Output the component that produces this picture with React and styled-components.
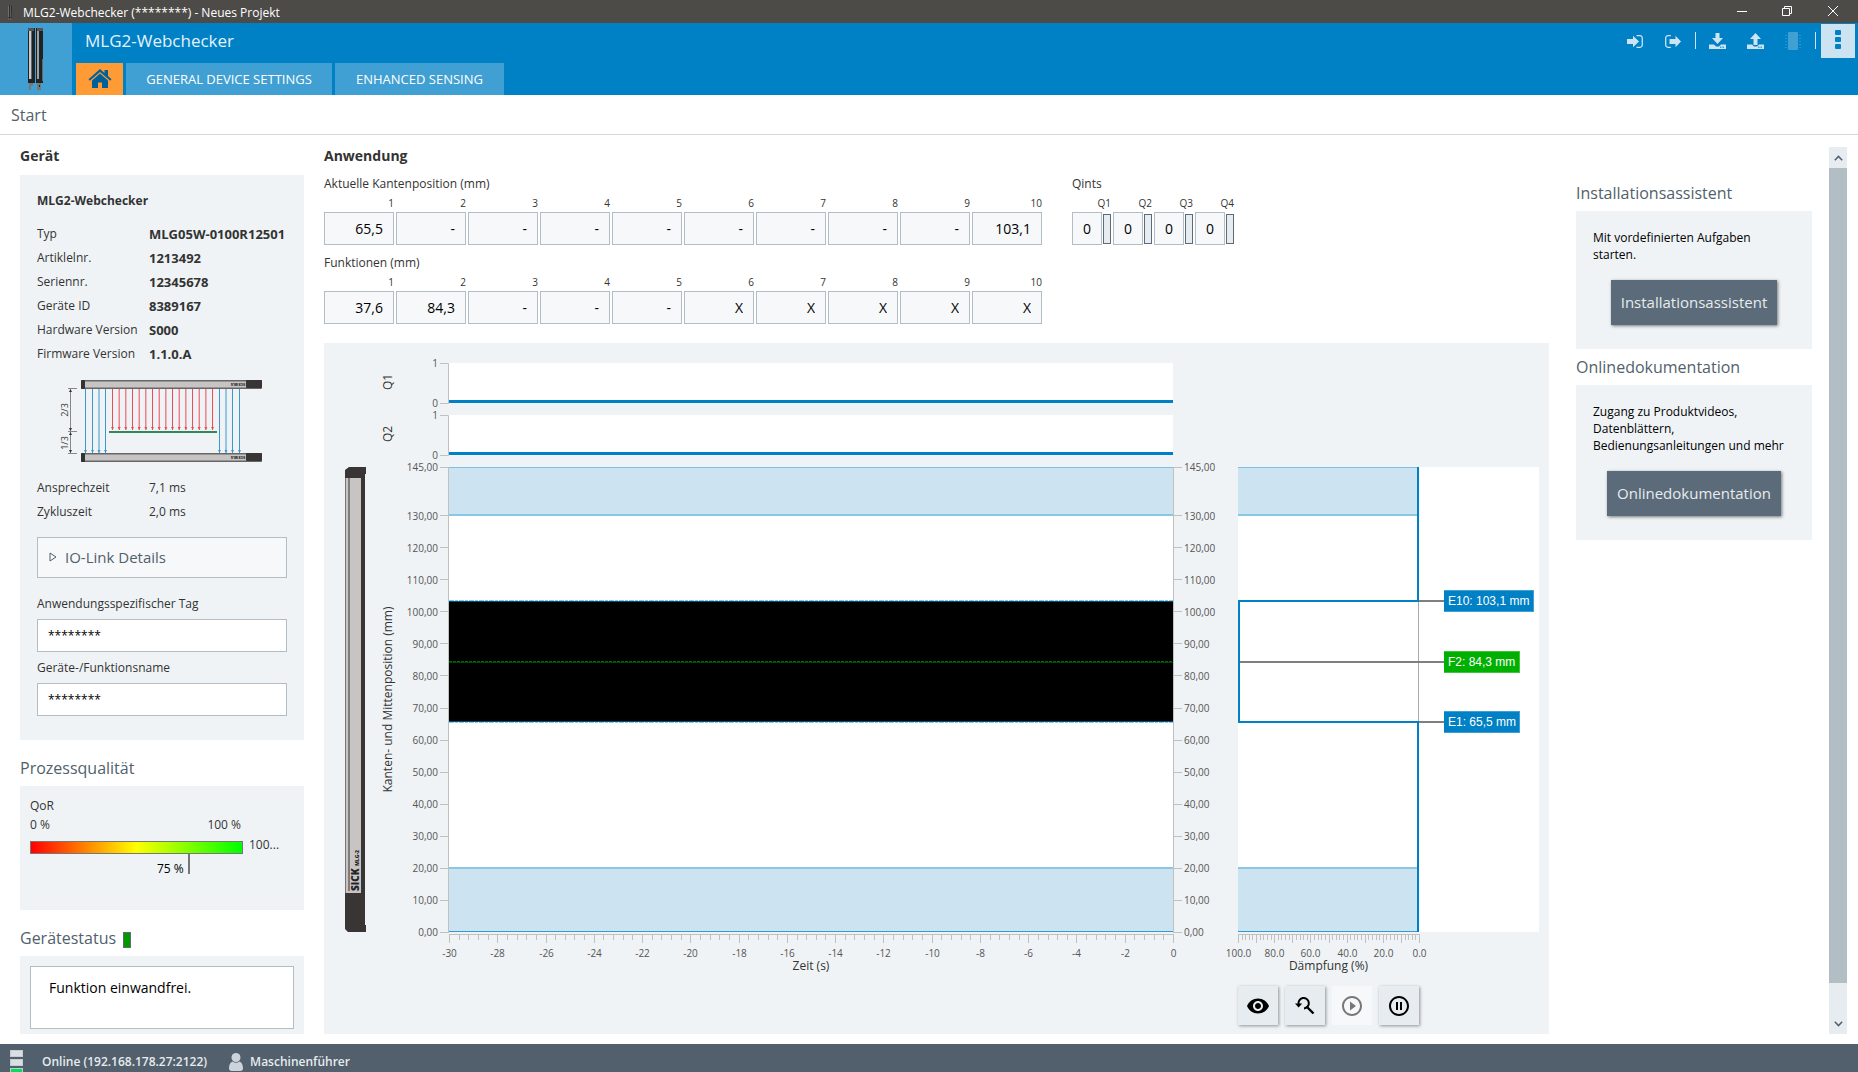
import React, { useLayoutEffect, useRef, useState } from 'react';
import styled, { createGlobalStyle } from 'styled-components';
import { MdVisibility, MdPlayCircleOutline, MdPauseCircleOutline } from 'react-icons/md';

const GlobalStyle = createGlobalStyle`
    * {
        box-sizing: border-box;
    }

    body {
        margin: 0;
        background: #fff;
        color: #333;
        font-family: 'Open Sans', 'Noto Sans', sans-serif;
        font-size: 12px;
    }

    button, input, textarea {
        font-family: inherit;
        margin: 0;
    }
`;

const Page = styled.div`
    display: flex;
    flex-direction: column;
    min-height: 100vh;
`;

/* ---------- window title ---------- */

const TitleBar = styled.div`
    display: flex;
    align-items: center;
    justify-content: space-between;
    height: 23px;
    padding: 1px 20px 0 8px;
    background: #4d4b48;
    color: #fff;
    font-size: 12px;
`;

const TitleText = styled.div`
    display: flex;
    align-items: center;
    gap: 11px;
`;

const WindowControls = styled.div`
    display: flex;
    gap: 35px;
    padding-bottom: 2px;
`;

const PlainButton = styled.button`
    display: flex;
    align-items: center;
    justify-content: center;
    padding: 0;
    border: 0;
    background: none;
    color: inherit;
    cursor: pointer;
`;

/* ---------- header ---------- */

const Header = styled.header`
    display: flex;
    height: 72px;
    background: #0080c5;
`;

const Logo = styled.div`
    display: flex;
    justify-content: center;
    width: 72px;
    padding-top: 5px;
    background: #409fd3;
`;

const HeaderMain = styled.div`
    display: flex;
    flex: 1;
    flex-direction: column;
    justify-content: space-between;
    padding-left: 4px;
`;

const HeaderTitle = styled.h1`
    margin: 0;
    padding: 6px 0 0 9px;
    color: #e6f2f9;
    font-size: 17px;
    font-weight: 400;
    line-height: 24px;
`;

const Tabs = styled.nav`
    display: flex;
    gap: 3px;
`;

const Tab = styled.a`
    display: flex;
    align-items: center;
    justify-content: center;
    width: ${(p) => p.$width}px;
    height: 32px;
    background: ${(p) => (p.$active ? '#ff9b35' : '#409fd3')};
    color: #fff;
    font-size: 13px;
    text-decoration: none;
`;

const HeaderTools = styled.div`
    display: flex;
    align-items: flex-start;
    padding: 1px 3px 0 0;
    color: #cce4f2;
`;

const ToolButton = styled(PlainButton)`
    width: 38px;
    height: 34px;
`;

const ToolDivider = styled.div`
    width: 1px;
    height: 17px;
    margin: 8px 2px 8px 3px;
    background: #cce4f2;
`;

const MenuButton = styled(PlainButton)`
    width: 34px;
    height: 34px;
    margin-left: 3px;
    padding-bottom: 3px;
    background: #cce4f2;
`;

const Breadcrumb = styled.div`
    height: 40px;
    padding-left: 11px;
    border-bottom: 1px solid #d0d8dd;
    color: #525f6c;
    font-size: 16px;
    line-height: 40px;
`;

/* ---------- page columns ---------- */

const Body = styled.div`
    display: flex;
    flex: 1;
    padding: 0 11px 10px 20px;
`;

const LeftColumn = styled.aside`
    width: 284px;
    margin-right: 20px;
    padding-top: 11px;
`;

const MainColumn = styled.main`
    display: flex;
    flex: 1;
    flex-direction: column;
    min-width: 0;
    padding-top: 11px;
`;

const RightColumn = styled.aside`
    width: 236px;
    margin: 0 17px 0 27px;
    padding-top: 46px;
`;

const BoldHeading = styled.h2`
    margin: 0 0 ${(p) => p.$gap}px;
    font-size: 14px;
    font-weight: 700;
    line-height: 20px;
`;

const Heading = styled.h2`
    display: flex;
    align-items: center;
    gap: 7px;
    margin: ${(p) => p.$top || 0}px 0 6px;
    color: #525f6c;
    font-size: 16px;
    font-weight: 400;
    line-height: 24px;
`;

const Card = styled.section`
    padding: ${(p) => p.$pad || '14px 17px 24px'};
    min-height: ${(p) => p.$height || 0}px;
    background: #eff3f6;
`;

const CardTitle = styled.h3`
    margin: 0 0 9px;
    font-size: 12px;
    font-weight: 700;
    line-height: 24px;
`;

const InfoTable = styled.table`
    border-collapse: collapse;
    line-height: 24px;
    white-space: nowrap;

    th {
        width: 112px;
        padding: 0;
        font-weight: 400;
        text-align: left;
    }

    td {
        padding: 0;
        font-size: ${(p) => (p.$bold ? 13 : 12)}px;
        font-weight: ${(p) => (p.$bold ? 700 : 400)};
    }
`;

const DrawingBox = styled.div`
    padding: 12px 0 12px 19px;

    svg {
        display: block;
    }
`;

const Expander = styled.button`
    display: flex;
    align-items: center;
    gap: 8px;
    width: 100%;
    height: 41px;
    margin: 13px 0 10px;
    padding: 0 11px 2px;
    border: 1px solid #b2bec4;
    background: #f6f8fa;
    color: #525f6c;
    font-size: 15px;
`;

const FieldLabel = styled.label`
    display: block;
    padding: 6px 0 5px;
    line-height: 20px;
`;

const TextInput = styled.input`
    display: block;
    width: 100%;
    height: 33px;
    padding: 0 10px;
    border: 1px solid #b2bec4;
    background: #fff;
    color: #000;
    font-size: 12px;
`;

/* ---------- quality + status ---------- */

const GaugeRow = styled.div`
    display: flex;
    gap: 6px;
`;

const Gauge = styled.div`
    width: 213px;
`;

const GaugeScale = styled.div`
    display: flex;
    justify-content: space-between;
    padding-right: 2px;
    margin-bottom: 7px;
    line-height: 18px;
`;

const GaugeBar = styled.div`
    height: 13px;
    border: 1px solid #777;
    background: linear-gradient(90deg, #f00, #ff0 50%, #0f0);
`;

const GaugeMark = styled.div`
    height: 20px;
    padding: 6px 4px 0 0;
    border-right: 2px solid #777;
    color: #000;
    line-height: 18px;
    text-align: right;
`;

const GaugeValue = styled.div`
    padding-top: 20px;
    line-height: 18px;
`;

const Line = styled.div`
    line-height: 21px;
`;

const StatusLamp = styled.span`
    width: 8px;
    height: 16px;
    margin-top: 4px;
    border: 1px solid #5c6b79;
    background: #090;
`;

const StatusText = styled.textarea`
    display: block;
    width: 100%;
    height: 63px;
    padding: 9px 18px;
    border: 1px solid #b2bec4;
    background: #fff;
    color: #000;
    font-size: 14px;
    line-height: 24px;
    resize: none;
`;

/* ---------- readings ---------- */

const Readings = styled.div`
    display: flex;
    gap: 30px;
    margin-bottom: 19px;
`;

const ReadingStack = styled.div`
    display: flex;
    flex-direction: column;
    gap: 8px;
`;

const ReadingTitle = styled.div`
    margin-bottom: 1px;
    line-height: 20px;
`;

const ReadingRow = styled.div`
    display: flex;
    gap: 2px;
`;

const Reading = styled.div`
    width: ${(p) => (p.$small ? 39 : 70)}px;
`;

const ReadingIndex = styled.label`
    display: block;
    font-size: 10px;
    line-height: 17px;
    text-align: right;
`;

const ReadingLine = styled.div`
    display: flex;
    align-items: center;
    gap: 1px;
`;

const ReadingValue = styled.input`
    flex: 1;
    min-width: 0;
    height: 33px;
    padding: 0 ${(p) => (p.$small ? 0 : 10)}px;
    border: 1px solid #b2bec4;
    background: #f6f8fa;
    color: #000;
    font-size: 14px;
    text-align: ${(p) => (p.$small ? 'center' : 'right')};
`;

const QLamp = styled.span`
    width: 8px;
    height: 30px;
    border: 1px solid #5c6b79;
    background: #e6ecef;
`;

/* ---------- chart ---------- */

const ChartPanel = styled.section`
    display: flex;
    flex: 1;
    flex-direction: column;
    background: #eff3f6;
`;

const ChartArea = styled.div`
    flex: 1;
    min-height: 400px;
    overflow: hidden;

    svg {
        display: block;
    }
`;

const ChartButtons = styled.div`
    display: flex;
    justify-content: flex-end;
    gap: 7px;
    padding: 6px 130px 9px 0;
`;

const ChartButton = styled.button`
    display: flex;
    align-items: center;
    justify-content: center;
    width: 40px;
    height: 39px;
    padding: 0;
    border: 0;
    background: #e6ecef;
    color: #000;
    box-shadow: 1px 1px 3px rgba(0, 0, 0, 0.4);

    &:disabled {
        background: #f6f8fa;
        color: #777;
        box-shadow: none;
    }
`;

/* ---------- right side ---------- */

const HelpText = styled.p`
    margin: 0 0 17px;
    color: #000;
    line-height: 17px;
    white-space: nowrap;
`;

const ActionButton = styled.button`
    display: block;
    height: 45px;
    margin: 0 auto;
    padding: 0 10px 2px;
    border: 0;
    background: #5c6b79;
    color: #e6ecef;
    font-size: 15px;
    box-shadow: 1px 1px 3px rgba(0, 0, 0, 0.5);
`;

const ScrollTrack = styled.div`
    display: flex;
    flex-direction: column;
    width: 18px;
    margin-top: 12px;
    background: #e6ecef;
    color: #525f6c;
`;

const ScrollButton = styled(PlainButton)`
    height: 21px;
`;

const ScrollThumb = styled.div`
    flex: 1;
    margin-bottom: 30px;
    background: #b2bec4;
`;

/* ---------- footer ---------- */

const Footer = styled.footer`
    display: flex;
    height: 28px;
    padding: 0 10px;
    background: #525f6c;
    color: #e6ecef;
    font-size: 12px;
    font-weight: 600;
    line-height: 35px;
    overflow: hidden;
`;

const FooterItem = styled.div`
    display: flex;
    gap: ${(p) => p.$gap}px;
    margin-right: 22px;
`;

/* ---------- icons ---------- */

const SensorPair = ({ width, height }) => (
    <svg width={width} height={height} viewBox="0 0 16 62">
        <rect x="0" y="0" width="7" height="55" fill="#222" />
        <rect x="1" y="3" width="2" height="48" fill="#c5cbcf" />
        <rect x="3" y="3" width="1" height="48" fill="#666" />
        <rect x="0" y="0" width="6" height="3" fill="#555" />
        <path d="M1 55h4v3H3v4H1z" fill="#777" />
        <rect x="8" y="0" width="7" height="55" fill="#222" />
        <rect x="9" y="3" width="2" height="48" fill="#9aa2a7" />
        <rect x="14" y="31" width="1" height="22" fill="#666" />
        <rect x="9" y="0" width="6" height="3" fill="#555" />
        <path d="M9 55h4v7H9z" fill="#777" />
        <rect x="11" y="57" width="1" height="2" fill="#222" />
    </svg>
);

const HomeIcon = () => (
    <svg width="24" height="20" viewBox="0 0 24 20" fill="#00609a">
        <path d="M12 0 .5 10.2l1.3 1.6L12 3l10.2 8.8 1.3-1.6L20 7V1h-3.5v2.9z" />
        <path d="M12 4.6 4 11.5V19h6v-5.5h4V19h6v-7.5z" />
    </svg>
);

const LoginIcon = () => (
    <svg width="16" height="13" viewBox="0 0 16 13">
        <path d="M0 4h6V.8l6 5.7-6 5.7V9H0z" fill="currentColor" />
        <path d="M9.5.7H13A2.2 2.2 0 0 1 15.3 3v7a2.2 2.2 0 0 1-2.3 2.3H9.5" fill="none" stroke="currentColor" strokeWidth="1.3" />
    </svg>
);

const LogoutIcon = () => (
    <svg width="16" height="13" viewBox="0 0 16 13">
        <path d="M4.5 4h6V.8l5.5 5.7-5.5 5.7V9h-6z" fill="currentColor" />
        <path d="M5.8.7H3A2.2 2.2 0 0 0 .7 3v7A2.2 2.2 0 0 0 3 12.3h2.8" fill="none" stroke="currentColor" strokeWidth="1.3" />
    </svg>
);

const TransferIcon = ({ up }) => (
    <svg width="17" height="17" viewBox="0 0 17 17" fill="currentColor">
        <path d={up ? 'M8.5 0 14 6h-3.5v6h-4V6H3z' : 'M6.5 0h4v5H14l-5.500 6L3 5h3.500z'} />
        <path d="M0 11.5h5l2 2h3l2-2h5V16H0z" />
        <path d="M11 13.5h1.500V15H11zM13.500 13.500H15V15h-1.500z" fill="#409fd3" />
    </svg>
);

const ChipIcon = () => (
    <svg width="16" height="18" viewBox="0 0 16 18" fill="#409fd3">
        <rect x="3" y="0" width="10" height="18" rx="1" />
        <path d="M0 3.5h16M0 6.5h16M0 9.5h16M0 12.5h16M0 15.5h16" stroke="#2b93cd" strokeDasharray="2 12" />
    </svg>
);

const DotsIcon = () => (
    <svg width="6" height="20" viewBox="0 0 6 20" fill="#0080c5">
        <rect y="0" width="6" height="5" rx="1" />
        <rect y="7" width="6" height="5" rx="1" />
        <rect y="14" width="6" height="5" rx="1" />
    </svg>
);

const ResetZoomIcon = () => (
    <svg width="20" height="20" viewBox="0 0 20 20" fill="none" stroke="#000" strokeWidth="2">
        <path d="M3.6 8.5A5.2 5.2 0 1 1 9 12.4" />
        <path d="M12.5 11.5 18.5 17.5" strokeWidth="2.4" />
        <path d="M0 7.5h7.2L3.6 11.5z" fill="#000" stroke="none" />
    </svg>
);

const ServerIcon = () => (
    <svg width="13" height="28" viewBox="0 0 13 28">
        <rect x=".5" y="6.5" width="12" height="6" fill="#d9dfe3" stroke="#c4ccd2" />
        <rect x=".5" y="15.5" width="12" height="6" fill="#d9dfe3" stroke="#c4ccd2" />
        <rect x=".5" y="24.5" width="12" height="6" fill="#00e05a" stroke="#c4ccd2" />
    </svg>
);

const UserIcon = () => (
    <svg width="14" height="28" viewBox="0 0 14 28" fill="#ccd4da">
        <circle cx="7" cy="13.5" r="4.5" />
        <path d="M0 24.5C0 20 2 18 3.5 17.5a6 6 0 0 0 7 0C12 18 14 20 14 24.5c0 1.500-1 2.500-2.500 2.500h-9C1 27 0 26 0 24.500z" />
    </svg>
);

const Chevron = ({ down }) => (
    <svg width="9" height="6" viewBox="0 0 9 6" fill="none" stroke="currentColor" strokeWidth="1.5">
        <path d={down ? 'M.8.8 4.5 4.6 8.2.8' : 'M.8 5.2 4.5 1.4 8.2 5.2'} />
    </svg>
);

/* sketch of the two sensor bars with the beams between them */
const Bar = ({ y }) => (
    <g>
        <rect x="21" y={y} width="181" height="9" rx="1" fill="#666" />
        <rect x="25" y={y + 1.5} width="162" height="6" fill="#c8c4c3" />
        <rect x="21" y={y} width="4" height="9" rx="1" fill="#333" />
        <rect x="186" y={y} width="16" height="8" rx="1" fill="#3a3535" />
        <text transform={`rotate(180 178 ${y + 3})`} x="178" y={y + 3} fontSize="3" fontWeight="800" textAnchor="middle" fill="#222">SICK MLG</text>
    </g>
);

const Beam = ({ x, to, color }) => (
    <g stroke={color} fill={color}>
        <path d={`M${x} 11V${to}`} strokeWidth="1" />
        <path d={`M${x - 1.5} ${to - 3}h3l-1.5 3z`} stroke="none" />
    </g>
);

const BeamSketch = () => {
    const blue = [25.5, 32.5, 39.0, 45.5, 159.5, 166.0, 172.5, 179.5];
    const red = Array.from({ length: 16 }, (_, i) => 52.5 + i * 6.67);
    return (
        <svg width="208" height="86" viewBox="-4 0 208 86">
            {blue.map((x) => <Beam key={x} x={x} to={75} color="#3b98cc" />)}
            {red.map((x) => <Beam key={x} x={x} to={52} color="#ee4956" />)}
            <rect x="49" y="53" width="108" height="2" fill="#2f8a57" />
            <path d="M10.5 11V75M8 10.5h9M8 53.5h9M8 75.5h9" stroke="#888" fill="none" />
            <path d="M9 14l1.5-3 1.5 3zM9 50l1.5 3 1.5-3zM9 57l1.5-3 1.5 3zM9 72l1.5 3 1.5-3z" fill="#333" />
            <text transform="rotate(-90 8 32)" x="8" y="32" fontSize="9" textAnchor="middle" fill="#333">2/3</text>
            <text transform="rotate(-90 8 65)" x="8" y="65" fontSize="9" textAnchor="middle" fill="#333">1/3</text>
            <Bar y={2} />
            <Bar y={75} />
        </svg>
    );
};

/* ---------- chart drawing ---------- */

const MAX_MM = 145;
const LEVELS = [145, 130, 120, 110, 100, 90, 80, 70, 60, 50, 40, 30, 20, 10, 0];
const EDGES = { e10: 103.1, f2: 84.3, e1: 65.5 };
const AXIS = '#c0c0c0';

const germanNumber = (n) => n.toFixed(2).replace('.', ',');

const Tag = ({ x, y, width, color, border, children }) => (
    <g>
        <rect x={x} y={y - 11} width={width} height="22" fill={border} />
        <rect x={x} y={y - 10} width={width - 1} height="20" fill={color} />
        <text x={x + 4} y={y + 4} fontSize="12" fontFamily="Liberation Sans, Arial, sans-serif" fill="#fff">{children}</text>
    </g>
);

const SwitchPlot = ({ name, y, left, right }) => (
    <g>
        <rect x={left} y={y} width={right - left} height="40" fill="#fff" />
        <rect x={left} y={y + 37} width={right - left} height="3" fill="#0080c5" />
        <path d={`M${left - 9} ${y + 0.5}h8.5v40h-8.5`} stroke={AXIS} fill="none" />
        <text x={left - 11} y={y + 4} fontSize="10" textAnchor="end" fill="#555">1</text>
        <text x={left - 11} y={y + 44} fontSize="10" textAnchor="end" fill="#555">0</text>
        <text transform={`rotate(-90 68 ${y + 19})`} x="68" y={y + 19} fontSize="12" textAnchor="middle" fill="#333">{name}</text>
    </g>
);

const Chart = () => {
    const box = useRef(null);
    const [width, setWidth] = useState(1225);
    const height = 637;

    useLayoutEffect(() => {
        const measure = () => {
            const rect = box.current.getBoundingClientRect();
            setWidth(Math.max(700, Math.round(rect.width)));
        };
        measure();
        window.addEventListener('resize', measure);
        return () => window.removeEventListener('resize', measure);
    }, []);

    const left = 125;
    const right = width - 376;
    const dLeft = width - 311;
    const dRight = width - 130;
    const end = width - 10;
    const top = 124;
    const bottom = height - 48;
    const middle = (top + bottom) / 2;

    const exactY = (mm) => bottom - (mm / MAX_MM) * (bottom - top);
    const yOf = (mm) => Math.round(exactY(mm));
    const labelY = (mm) => Math.round(exactY(mm) + 4.4);
    const tOf = (s) => Math.round(right + (s / 30) * (right - left)) + 0.5;
    const dOf = (p) => Math.round(dRight - (p / 100) * (dRight - dLeft)) + 0.5;

    const seconds = Array.from({ length: 76 }, (_, i) => -30 + i * 0.4);
    const damping = Array.from({ length: 51 }, (_, i) => i * 2);
    const y10 = yOf(EDGES.e10);
    const yF = yOf(EDGES.f2);
    const y1 = yOf(EDGES.e1);

    const zones = (a, b) => (
        <g>
            <rect x={a} y={top} width={b - a} height={yOf(130) - top} fill="#cce4f2" />
            <rect x={a} y={top} width={b - a} height="1" fill="#7fbfe2" />
            <rect x={a} y={yOf(130) - 1} width={b - a} height="2" fill="#8cc6e5" />
            <rect x={a} y={yOf(20)} width={b - a} height={bottom - yOf(20)} fill="#cce4f2" />
            <rect x={a} y={yOf(20) - 1} width={b - a} height="2" fill="#8cc6e5" />
            <rect x={a} y={bottom - 1} width={b - a} height="1" fill="#3399d0" />
        </g>
    );

    return (
        <ChartArea ref={box}>
            <svg width={width} height={height} fontFamily="Open Sans, Noto Sans, sans-serif">
                <SwitchPlot name="Q1" y={20} left={left} right={right} />
                <SwitchPlot name="Q2" y={72} left={left} right={right} />

                {/* sensor profile next to the axis */}
                <path d={`M21 ${top + 3}l4-3h17v7h-1v${bottom - top - 14}h1v7H24l-3-3z`} fill="#3a3535" />
                <rect x="21" y={top + 11} width="16" height={bottom - top - 50} fill="#c8c4c3" />
                <rect x="21" y={top + 11} width="1" height={bottom - top - 50} fill="#777" />
                <rect x="24" y={top + 11} width="2" height={bottom - top - 52} fill="#807c7b" />
                <text transform={`rotate(-90 35 ${bottom - 41})`} x="35" y={bottom - 41} fontSize="10" fontWeight="800" fill="#222">SICK</text>
                <text transform={`rotate(-90 35 ${bottom - 66})`} x="35" y={bottom - 66} fontSize="5" fontWeight="800" fill="#222">MLG-2</text>

                <text transform={`rotate(-90 68 ${middle})`} x="68" y={middle} fontSize="12" textAnchor="middle" fill="#333">
                    Kanten- und Mittenposition (mm)
                </text>

                {/* position over time */}
                <rect x={left} y={top} width={right - left} height={bottom - top} fill="#fff" />
                {zones(left, right)}
                <rect x={left} y={y10} width={right - left} height={y1 - y10} fill="#000" />
                <path d={`M${left} ${y10 - 0.5}H${right}M${left} ${y1 + 0.5}H${right}`} stroke="#8cc6e5" strokeDasharray="5 1 3 1" />
                <path d={`M${left} ${y10 + 0.5}H${right}M${left} ${y1 - 0.5}H${right}`} stroke="#00507c" />
                <path d={`M${left} ${yF + 0.5}H${right}`} stroke="#004600" />
                <path d={`M${left} ${yF - 0.5}H${right}`} stroke="#006a00" strokeDasharray="3 1" />

                <path d={`M${left - 0.5} ${top}V${bottom}M${right + 0.5} ${top}V${bottom}`} stroke={AXIS} />
                {LEVELS.map((mm) => (
                    <g key={mm}>
                        <path d={`M${left - 9} ${yOf(mm) + 0.5}h9M${right} ${yOf(mm) + 0.5}h9`} stroke={AXIS} />
                        <text x={left - 11} y={labelY(mm)} fontSize="10" textAnchor="end" fill="#555">{germanNumber(mm)}</text>
                        <text x={right + 11} y={labelY(mm)} fontSize="10" fill="#555">{germanNumber(mm)}</text>
                    </g>
                ))}

                <path d={`M${left} ${bottom + 2.5}H${right + 1}`} stroke={AXIS} />
                {seconds.map((s, i) => (
                    <path key={i} d={`M${tOf(s)} ${bottom + 2}v${i % 5 ? 6 : 9}`} stroke={AXIS} />
                ))}
                {seconds.filter((_, i) => i % 5 === 0).map((s) => (
                    <text key={s} x={tOf(s)} y={bottom + 25} fontSize="10" textAnchor="middle" fill="#555">{Math.round(s)}</text>
                ))}
                <text x={(left + right) / 2} y={bottom + 38} fontSize="12" textAnchor="middle" fill="#333">Zeit (s)</text>

                {/* damping profile */}
                <rect x={dLeft} y={top} width={end - dLeft} height={bottom - top} fill="#fff" />
                {zones(dLeft, dRight)}
                <path d={`M${dRight - 0.5} ${y10}V${y1}`} stroke="#aaa" />
                <path d={`M${dRight} ${y10}h25M${dLeft} ${yF}H${dRight + 25}M${dRight} ${y1}h25`} stroke="#7f7f7f" strokeWidth="2" />
                <path
                    d={`M${dRight - 1} ${top}V${y10}H${dLeft + 1}V${y1}H${dRight - 1}V${bottom}`}
                    fill="none"
                    stroke="#0080c5"
                    strokeWidth="2"
                />
                <Tag x={dRight + 25} y={y10} width={90} color="#0080c5" border="#409fd3">E10: 103,1 mm</Tag>
                <Tag x={dRight + 25} y={yF} width={76} color="#00b000" border="#40c440">F2: 84,3 mm</Tag>
                <Tag x={dRight + 25} y={y1} width={76} color="#0080c5" border="#409fd3">E1: 65,5 mm</Tag>

                <path d={`M${dLeft} ${bottom + 2.5}H${dRight + 1}`} stroke={AXIS} />
                {damping.map((p) => (
                    <path key={p} d={`M${dOf(p)} ${bottom + 2}v${p % 10 ? 6 : 9}`} stroke={AXIS} />
                ))}
                {[100, 80, 60, 40, 20, 0].map((p) => (
                    <text key={p} x={dOf(p)} y={bottom + 25} fontSize="10" textAnchor="middle" fill="#555">{p.toFixed(1)}</text>
                ))}
                <text x={(dLeft + dRight) / 2} y={bottom + 38} fontSize="12" textAnchor="middle" fill="#333">Dämpfung (%)</text>
            </svg>
        </ChartArea>
    );
};

/* ---------- data ---------- */

const device = [
    ['Typ', 'MLG05W-0100R12501'],
    ['Artiklelnr.', '1213492'],
    ['Seriennr.', '12345678'],
    ['Geräte ID', '8389167'],
    ['Hardware Version', 'S000'],
    ['Firmware Version', '1.1.0.A'],
];

const timing = [
    ['Ansprechzeit', '7,1 ms'],
    ['Zykluszeit', '2,0 ms'],
];

const edgePositions = ['65,5', '-', '-', '-', '-', '-', '-', '-', '-', '103,1'];
const functionValues = ['37,6', '84,3', '-', '-', '-', 'X', 'X', 'X', 'X', 'X'];
const qor = 75;

const Info = ({ rows, bold }) => (
    <InfoTable $bold={bold}>
        <tbody>
            {rows.map(([name, value]) => (
                <tr key={name}>
                    <th scope="row">{name}</th>
                    <td>{value}</td>
                </tr>
            ))}
        </tbody>
    </InfoTable>
);

const ReadingGroup = ({ id, title, values, small }) => (
    <div role="group" aria-labelledby={id}>
        <ReadingTitle id={id}>{title}</ReadingTitle>
        <ReadingRow>
            {values.map((value, i) => (
                <Reading key={i} $small={small}>
                    <ReadingIndex htmlFor={`${id}-${i}`}>{small ? `Q${i + 1}` : i + 1}</ReadingIndex>
                    <ReadingLine>
                        <ReadingValue id={`${id}-${i}`} $small={small} value={value} readOnly />
                        {small && <QLamp />}
                    </ReadingLine>
                </Reading>
            ))}
        </ReadingRow>
    </div>
);

const App = () => (
    <Page>
        <GlobalStyle />
        <TitleBar>
            <TitleText>
                <SensorPair width={4} height={15} />
                MLG2-Webchecker (********) - Neues Projekt
            </TitleText>
            <WindowControls>
                <PlainButton aria-label="Minimieren">
                    <svg width="10" height="10"><path d="M0 5.5h10" stroke="#fff" /></svg>
                </PlainButton>
                <PlainButton aria-label="Verkleinern">
                    <svg width="11" height="11" fill="none" stroke="#fff">
                        <path d="M.5 2.5h7v7h-7zM2.5 2.5v-2h7v7h-2" />
                    </svg>
                </PlainButton>
                <PlainButton aria-label="Schließen">
                    <svg width="10" height="10"><path d="M0 0l10 10M10 0 0 10" stroke="#fff" /></svg>
                </PlainButton>
            </WindowControls>
        </TitleBar>

        <Header>
            <Logo><SensorPair width={16} height={62} /></Logo>
            <HeaderMain>
                <HeaderTitle>MLG2-Webchecker</HeaderTitle>
                <Tabs>
                    <Tab href="#start" $width={47} $active aria-label="Start"><HomeIcon /></Tab>
                    <Tab href="#general" $width={206}>GENERAL DEVICE SETTINGS</Tab>
                    <Tab href="#sensing" $width={169}>ENHANCED SENSING</Tab>
                </Tabs>
            </HeaderMain>
            <HeaderTools>
                <ToolButton aria-label="Anmelden"><LoginIcon /></ToolButton>
                <ToolButton aria-label="Abmelden"><LogoutIcon /></ToolButton>
                <ToolDivider />
                <ToolButton aria-label="Vom Gerät laden"><TransferIcon /></ToolButton>
                <ToolButton aria-label="Zum Gerät laden"><TransferIcon up /></ToolButton>
                <ToolButton aria-label="Speicher" disabled><ChipIcon /></ToolButton>
                <ToolDivider />
                <MenuButton aria-label="Menü"><DotsIcon /></MenuButton>
            </HeaderTools>
        </Header>

        <Breadcrumb>Start</Breadcrumb>

        <Body>
            <LeftColumn>
                <BoldHeading $gap={9}>Gerät</BoldHeading>
                <Card>
                    <CardTitle>MLG2-Webchecker</CardTitle>
                    <Info rows={device} bold />
                    <DrawingBox><BeamSketch /></DrawingBox>
                    <Info rows={timing} />
                    <Expander aria-expanded="false">
                        <svg width="8" height="10" fill="none" stroke="#525f6c"><path d="M1 1l6 4-6 4z" /></svg>
                        IO-Link Details
                    </Expander>
                    <FieldLabel htmlFor="tag">Anwendungsspezifischer Tag</FieldLabel>
                    <TextInput id="tag" defaultValue="********" />
                    <FieldLabel htmlFor="name">Geräte-/Funktionsname</FieldLabel>
                    <TextInput id="name" defaultValue="********" />
                </Card>

                <Heading $top={16}>Prozessqualität</Heading>
                <Card $pad="9px 10px" $height={124}>
                    <Line>QoR</Line>
                    <GaugeRow>
                        <Gauge>
                            <GaugeScale><span>0 %</span><span>100 %</span></GaugeScale>
                            <GaugeBar />
                            <GaugeMark style={{ width: `${qor}%` }}>{qor} %</GaugeMark>
                        </Gauge>
                        <GaugeValue>100...</GaugeValue>
                    </GaugeRow>
                </Card>

                <Heading $top={16}>Gerätestatus <StatusLamp /></Heading>
                <Card $pad="10px 10px 5px">
                    <StatusText aria-label="Gerätestatus" readOnly value="Funktion einwandfrei." />
                </Card>
            </LeftColumn>

            <MainColumn>
                <BoldHeading $gap={8}>Anwendung</BoldHeading>
                <Readings>
                    <ReadingStack>
                        <ReadingGroup id="edges" title="Aktuelle Kantenposition (mm)" values={edgePositions} />
                        <ReadingGroup id="functions" title="Funktionen (mm)" values={functionValues} />
                    </ReadingStack>
                    <ReadingGroup id="qints" title="Qints" values={['0', '0', '0', '0']} small />
                </Readings>
                <ChartPanel>
                    <Chart />
                    <ChartButtons>
                        <ChartButton aria-label="Ansicht"><MdVisibility size={24} /></ChartButton>
                        <ChartButton aria-label="Zoom zurücksetzen"><ResetZoomIcon /></ChartButton>
                        <ChartButton aria-label="Start" disabled><MdPlayCircleOutline size={24} /></ChartButton>
                        <ChartButton aria-label="Pause"><MdPauseCircleOutline size={24} /></ChartButton>
                    </ChartButtons>
                </ChartPanel>
            </MainColumn>

            <RightColumn>
                <Heading>Installationsassistent</Heading>
                <Card $pad="18px 17px 24px">
                    <HelpText>Mit vordefinierten Aufgaben<br />starten.</HelpText>
                    <ActionButton>Installationsassistent</ActionButton>
                </Card>
                <Heading $top={6}>Onlinedokumentation</Heading>
                <Card $pad="18px 17px 24px">
                    <HelpText>Zugang zu Produktvideos,<br />Datenblättern,<br />Bedienungsanleitungen und mehr</HelpText>
                    <ActionButton>Onlinedokumentation</ActionButton>
                </Card>
            </RightColumn>

            <ScrollTrack>
                <ScrollButton aria-label="Nach oben"><Chevron /></ScrollButton>
                <ScrollThumb />
                <ScrollButton aria-label="Nach unten"><Chevron down /></ScrollButton>
            </ScrollTrack>
        </Body>

        <Footer>
            <FooterItem $gap={19}><ServerIcon />Online (192.168.178.27:2122)</FooterItem>
            <FooterItem $gap={7}><UserIcon />Maschinenführer</FooterItem>
        </Footer>
    </Page>
);

export default App;
